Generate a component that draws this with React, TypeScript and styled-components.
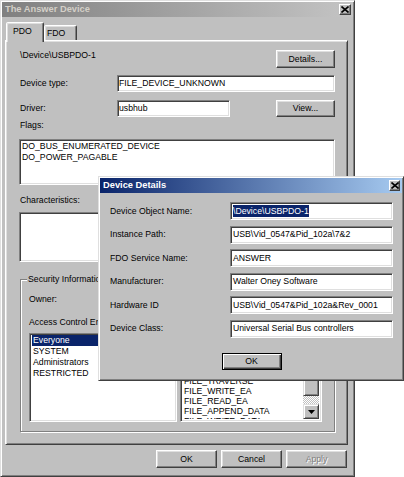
import React from "react";
import styled, { createGlobalStyle } from "styled-components";

const Global = createGlobalStyle`
  html, body { margin: 0; padding: 0; background: #fff; }
  body {
    font-family: "Liberation Sans", Arial, sans-serif;
    font-size: 8.7px;
    line-height: 11px;
    color: #000;
  }
  * { box-sizing: border-box; }
`;

const Desktop = styled.div`
  position: relative;
  width: 404px;
  height: 477px;
  overflow: hidden;
  background: #fff;
`;

const Frame = styled.div<{ $w: number; $h: number }>`
  width: ${(p) => p.$w}px;
  height: ${(p) => p.$h}px;
  background: #c0c0c0;
  border: 1px solid;
  border-color: #dfdfdf #404040 #404040 #dfdfdf;
  box-shadow: inset 1px 1px #fff, inset -1px -1px #808080;
  padding: 1px;
  display: flex;
  flex-direction: column;
`;

const DialogFrame = styled(Frame)`
  position: absolute;
  left: 98px;
  top: 176px;
`;

const TitleBar = styled.div<{ $active?: boolean; $h: number }>`
  flex: none;
  height: ${(p) => p.$h}px;
  display: flex;
  align-items: center;
  justify-content: space-between;
  padding: 0 2px 0 3px;
  background: ${(p) =>
    p.$active
      ? "linear-gradient(to right, #0a246a, #a6caf0)"
      : "linear-gradient(to right, #808080, #c4c4c4)"};
  color: ${(p) => (p.$active ? "#fff" : "#d4d0c8")};
  font-weight: bold;
  font-size: 9.3px;
`;

const CloseBtn = styled.div<{ $w: number; $h: number }>`
  width: ${(p) => p.$w}px;
  height: ${(p) => p.$h}px;
  background: #c0c0c0;
  border: 1px solid;
  border-color: #fff #404040 #404040 #fff;
  box-shadow: inset -1px -1px #808080;
  display: flex;
  align-items: center;
  justify-content: center;
`;

const TabStrip = styled.div`
  flex: none;
  position: relative;
  z-index: 1;
  height: 18px;
  margin-top: 5px;
  padding-left: 4px;
  display: flex;
  align-items: flex-end;
`;

const Tab = styled.div<{ $active?: boolean; $w: number; $pl: number }>`
  width: ${(p) => p.$w}px;
  height: ${(p) => (p.$active ? 20 : 15)}px;
  margin-bottom: ${(p) => (p.$active ? -2 : 0)}px;
  padding: ${(p) => (p.$active ? "0 0 2px" : "0")} ${(p) => p.$pl}px;
  background: #c0c0c0;
  border: 1px solid;
  border-bottom: none;
  border-color: #fff #404040 transparent #fff;
  box-shadow: inset -1px 0 #808080, inset 1px 1px #dfdfdf;
  border-radius: 2px 2px 0 0;
  display: flex;
  align-items: center;
`;

const Pane = styled.div`
  flex: 1;
  margin: 0 5px 0 3px;
  background: #c0c0c0;
  border: 1px solid;
  border-color: #fff #404040 #404040 #fff;
  box-shadow: inset 1px 1px #dfdfdf, inset -1px -1px #808080;
  padding: 9px 12px 0 14px;
  display: flex;
  flex-direction: column;
`;

const TopRow = styled.div`
  height: 18px;
  display: flex;
  justify-content: space-between;
  align-items: flex-start;
`;

const FormRow = styled.div<{ $cols: string; $mt: number }>`
  height: 17px;
  margin-top: ${(p) => p.$mt}px;
  display: grid;
  grid-template-columns: ${(p) => p.$cols};
  align-items: center;
`;

const Label = styled.div<{ $mt?: number }>`
  margin-top: ${(p) => p.$mt ?? 0}px;
  line-height: 11px;
  white-space: nowrap;
`;

const Sunken = styled.div`
  background: #fff;
  border: 1px solid;
  border-color: #808080 #fff #fff #808080;
  box-shadow: inset 1px 1px #404040, inset -1px -1px #dfdfdf;
`;

const Field = styled(Sunken)<{ $h?: number }>`
  height: ${(p) => p.$h ?? 17}px;
  padding: 0 1px;
  display: flex;
  align-items: center;
  white-space: nowrap;
  overflow: hidden;
`;

const TextBox = styled(Sunken)<{ $h: number; $mt: number }>`
  height: ${(p) => p.$h}px;
  margin: ${(p) => p.$mt}px 0 0 -1px;
  padding: 1px 2px;
  overflow: hidden;
`;

const Btn = styled.div<{ $w: number; $h?: number; $default?: boolean; $disabled?: boolean }>`
  width: ${(p) => p.$w}px;
  height: ${(p) => p.$h ?? 18}px;
  background: #c0c0c0;
  border: 1px solid;
  border-color: ${(p) => (p.$default ? "#000" : "#fff #404040 #404040 #fff")};
  box-shadow: ${(p) =>
    p.$default
      ? "inset 1px 1px #fff, inset -1px -1px #404040, inset -2px -2px #808080"
      : "inset -1px -1px #808080, inset 1px 1px #dfdfdf"};
  display: flex;
  align-items: center;
  justify-content: center;
  color: ${(p) => (p.$disabled ? "#808080" : "#000")};
  text-shadow: ${(p) => (p.$disabled ? "1px 1px #fff" : "none")};
  white-space: nowrap;
`;

const GroupBox = styled.div`
  position: relative;
  margin-top: 17px;
  margin-right: 0;
  border: 1px solid #808080;
  box-shadow: inset 1px 1px #fff, 1px 1px #fff;
  padding: 14px 12px 9px 8px;
`;

const GroupCaption = styled.span`
  position: absolute;
  top: -6px;
  left: 6px;
  padding: 0 1px;
  background: #c0c0c0;
  line-height: 11px;
  white-space: nowrap;
`;

const Lists = styled.div`
  margin-top: 5px;
  height: 89px;
  display: grid;
  grid-template-columns: 148px 1fr;
  column-gap: 3px;
`;

const ListBox = styled(Sunken)<{ $pt: number }>`
  padding: ${(p) => p.$pt}px 2px 2px 2px;
  overflow: hidden;
`;

const ScrollList = styled(Sunken)`
  padding: 2px;
  display: grid;
  grid-template-columns: 1fr 16px;
  overflow: hidden;
`;

const ListItems = styled.div`
  padding-top: 0;
  overflow: hidden;
`;

const Item = styled.div<{ $h: number; $selected?: boolean }>`
  height: ${(p) => p.$h}px;
  line-height: ${(p) => p.$h}px;
  padding-left: 1px;
  white-space: nowrap;
  background: ${(p) => (p.$selected ? "#0a246a" : "transparent")};
  color: ${(p) => (p.$selected ? "#fff" : "#000")};
`;

const ScrollBar = styled.div`
  display: flex;
  flex-direction: column;
`;

const ScrollArrow = styled.div`
  flex: none;
  height: 15px;
  background: #c0c0c0;
  border: 1px solid;
  border-color: #dfdfdf #404040 #404040 #dfdfdf;
  box-shadow: inset 1px 1px #fff, inset -1px -1px #808080;
  display: flex;
  align-items: center;
  justify-content: center;
`;

const Thumb = styled(ScrollArrow)<{ $h: number }>`
  height: ${(p) => p.$h}px;
`;

const Track = styled.div`
  flex: 1;
  background: repeating-conic-gradient(#fff 0 25%, #c0c0c0 0 50%) 0 0 / 2px 2px;
`;

const ButtonRow = styled.div`
  flex: none;
  height: 18px;
  margin: 5px 6px 7px 0;
  display: flex;
  justify-content: flex-end;
  gap: 4px;
`;

const DialogBody = styled.div`
  flex: 1;
  padding: 9px 9px 0 10px;
  display: flex;
  flex-direction: column;
`;

const DetailGrid = styled.div`
  display: grid;
  grid-template-columns: 120px 1fr;
  grid-auto-rows: 18px;
  row-gap: 5.6px;
  align-items: center;
`;

const DetailField = styled(Field)`
  height: 18px;
  padding: 0 2px;
`;

const Selected = styled.span`
  background: #0a246a;
  color: #fff;
  line-height: 12px;
`;

const DialogFooter = styled.div`
  margin-top: 15px;
  display: flex;
  justify-content: center;
`;

const XIcon = () => (
  <svg width="8" height="7" viewBox="0 0 8 7">
    <path d="M0.5 0.5 L7.5 6.5 M7.5 0.5 L0.5 6.5" stroke="#000" strokeWidth="1.6" fill="none" />
  </svg>
);

const DownArrow = () => (
  <svg width="7" height="4" viewBox="0 0 7 4">
    <path d="M0 0 H7 L3.5 4 Z" fill="#000" />
  </svg>
);

const UpArrow = () => (
  <svg width="7" height="4" viewBox="0 0 7 4">
    <path d="M0 4 H7 L3.5 0 Z" fill="#000" />
  </svg>
);

const rights = [
  "DELETE",
  "FILE_WRITE_ATTRIBUTES",
  "FILE_READ_ATTRIBUTES",
  "FILE_DELETE_CHILD",
  "FILE_TRAVERSE",
  "FILE_WRITE_EA",
  "FILE_READ_EA",
  "FILE_APPEND_DATA",
  "FILE_WRITE_DATA",
  "FILE_READ_DATA",
];

const details: [string, React.ReactNode][] = [
  ["Device Object Name:", <Selected>\Device\USBPDO-1</Selected>],
  ["Instance Path:", "USB\\Vid_0547&Pid_102a\\7&2"],
  ["FDO Service Name:", "ANSWER"],
  ["Manufacturer:", "Walter Oney Software"],
  ["Hardware ID", "USB\\Vid_0547&Pid_102a&Rev_0001"],
  ["Device Class:", "Universal Serial Bus controllers"],
];

export default function App() {
  return (
    <Desktop>
      <Global />
      <Frame $w={355} $h={477}>
        <TitleBar $h={15}>
          <span>The Answer Device</span>
          <CloseBtn $w={12} $h={11}>
            <XIcon />
          </CloseBtn>
        </TitleBar>
        <TabStrip>
          <Tab $active $w={38} $pl={6}>PDO</Tab>
          <Tab $w={33} $pl={2}>FDO</Tab>
        </TabStrip>
        <Pane>
          <TopRow>
            <Label>\Device\USBPDO-1</Label>
            <Btn $w={59}>Details...</Btn>
          </TopRow>
          <FormRow $cols="97px 1fr" $mt={7}>
            <Label>Device type:</Label>
            <Field>FILE_DEVICE_UNKNOWN</Field>
          </FormRow>
          <FormRow $cols="97px 113px 1fr 59px" $mt={8}>
            <Label>Driver:</Label>
            <Field>usbhub</Field>
            <span />
            <Btn $w={59} $h={17}>View...</Btn>
          </FormRow>
          <Label $mt={3}>Flags:</Label>
          <TextBox $h={46} $mt={8}>
            <div>DO_BUS_ENUMERATED_DEVICE</div>
            <div>DO_POWER_PAGABLE</div>
          </TextBox>
          <Label $mt={10}>Characteristics:</Label>
          <TextBox $h={50} $mt={6} />
          <GroupBox>
            <GroupCaption>Security Information</GroupCaption>
            <Label>Owner:</Label>
            <Label $mt={12}>Access Control Entries:</Label>
            <Lists>
              <ListBox $pt={1}>
                <Item $h={11} $selected>Everyone</Item>
                <Item $h={11}>SYSTEM</Item>
                <Item $h={11}>Administrators</Item>
                <Item $h={11}>RESTRICTED</Item>
              </ListBox>
              <ScrollList>
                <ListItems>
                  {rights.map((r) => (
                    <Item key={r} $h={10}>{r}</Item>
                  ))}
                </ListItems>
                <ScrollBar>
                  <ScrollArrow><UpArrow /></ScrollArrow>
                  <Thumb $h={45} />
                  <Track />
                  <ScrollArrow><DownArrow /></ScrollArrow>
                </ScrollBar>
              </ScrollList>
            </Lists>
          </GroupBox>
        </Pane>
        <ButtonRow>
          <Btn $w={61}>OK</Btn>
          <Btn $w={61}>Cancel</Btn>
          <Btn $w={61} $disabled>Apply</Btn>
        </ButtonRow>
      </Frame>

      <DialogFrame $w={306} $h={205}>
        <TitleBar $active $h={15}>
          <span>Device Details</span>
          <CloseBtn $w={11} $h={11}>
            <XIcon />
          </CloseBtn>
        </TitleBar>
        <DialogBody>
          <DetailGrid>
            {details.map(([label, value], i) => (
              <React.Fragment key={i}>
                <Label>{label}</Label>
                <DetailField>{value}</DetailField>
              </React.Fragment>
            ))}
          </DetailGrid>
          <DialogFooter>
            <Btn $w={60} $h={17} $default>OK</Btn>
          </DialogFooter>
        </DialogBody>
      </DialogFrame>
    </Desktop>
  );
}
